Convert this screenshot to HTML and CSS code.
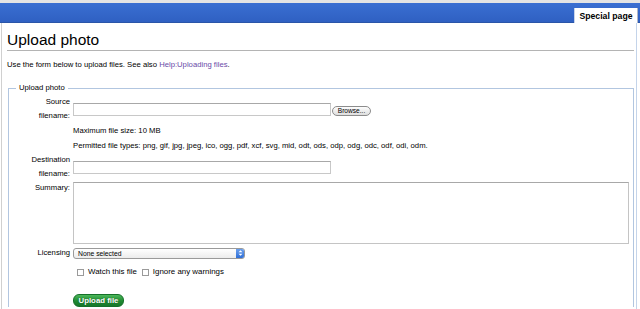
FILE: index.html
```html
<!DOCTYPE html>
<html>
<head>
<meta charset="utf-8">
<link rel="stylesheet" href="styles.css">
</head>
<body>
<div class="topstrip"></div>
<div class="topbar"><div class="tab">Special page</div></div>
<div class="page">
  <h1 class="title">Upload photo</h1>
  <p class="intro">Use the form below to upload files. See also <a class="link" href="#">Help:Uploading files</a>.</p>
  <fieldset class="box">
    <legend class="legend">Upload photo</legend>
    <div class="row row-source">
      <div class="label">Source<br>filename:</div>
      <div class="field source-field">
        <span class="input input-source"></span>
        <span class="browse">Browse...</span>
      </div>
    </div>
    <div class="row row-note1">
      <div class="label"></div>
      <div class="field note">Maximum file size: 10 MB</div>
    </div>
    <div class="row row-note2">
      <div class="label"></div>
      <div class="field note">Permitted file types: png, gif, jpg, jpeg, ico, ogg, pdf, xcf, svg, mid, odt, ods, odp, odg, odc, odf, odi, odm.</div>
    </div>
    <div class="row row-dest">
      <div class="label">Destination<br>filename:</div>
      <div class="field"><span class="input input-dest"></span></div>
    </div>
    <div class="row row-summary">
      <div class="label">Summary:</div>
      <div class="field"><span class="textarea"></span></div>
    </div>
    <div class="row row-license">
      <div class="label">Licensing</div>
      <div class="field">
        <span class="select">None selected<span class="select-arrow"><svg width="7" height="8" viewBox="0 0 7 8"><path d="M1.5 3.2 L3.5 1.2 L5.5 3.2 Z M1.5 4.8 L3.5 6.8 L5.5 4.8 Z" fill="#fff"/></svg></span></span>
      </div>
    </div>
    <div class="row row-checks">
      <div class="label"></div>
      <div class="field checks">
        <span class="check"></span><span class="check-label">Watch this file</span>
        <span class="check check2"></span><span class="check-label">Ignore any warnings</span>
      </div>
    </div>
    <div class="row row-submit">
      <div class="label"></div>
      <div class="field"><span class="upload">Upload file</span></div>
    </div>
  </fieldset>
</div>
</body>
</html>
```

FILE: styles.css
```css
html, body {
  margin: 0;
  padding: 0;
  background: #fff;
  font-family: "Liberation Sans", Arial, sans-serif;
  color: #000;
  overflow: hidden;
}

.topstrip {
  height: 3px;
  background: #e4e4e4;
}

.topbar {
  height: 19px;
  background: linear-gradient(#3a6fd2, #2f60c2);
  border-bottom: 1px solid #2a55a8;
  display: flex;
  justify-content: flex-end;
  align-items: flex-end;
  padding-right: 2px;
}

.tab {
  background: #fff;
  height: 15px;
  width: 64px;
  box-sizing: border-box;
  border-left: 1px solid #c8d4ea;
  border-right: 1px solid #b0b8c8;
  font-size: 8.7px;
  font-weight: bold;
  text-align: center;
  line-height: 16px;
  margin-bottom: -1px;
}

.page {
  margin: 0 3px 0 1px;
  border-left: 1px solid #d0d0d0;
  border-right: 1px solid #c4d4ea;
  padding: 0 2px 0 5px;
  height: 290px;
}

.title {
  margin: 0;
  padding-top: 8px;
  font-size: 15.5px;
  font-weight: normal;
  line-height: 17px;
  border-bottom: 1px solid #b4b4b4;
  padding-bottom: 2px;
}

.intro {
  margin: 9px 0 0 0;
  font-size: 7.7px;
  line-height: 10px;
}

.link {
  color: #6a4aa8;
  text-decoration: none;
}

.box {
  margin: 13px 0 0 1px;
  padding: 0 0 0 0;
  border: 1px solid #b2c6e0;
  border-bottom: none;
  min-width: 0;
}

.legend {
  font-size: 7.7px;
  padding: 0 3px;
  margin-left: 7px;
  line-height: 10px;
}

.row {
  display: flex;
  align-items: flex-start;
}

.label {
  width: 61px;
  flex: none;
  text-align: right;
  font-size: 7.7px;
  line-height: 14px;
  margin-right: 3px;
}

.field {
  font-size: 7.7px;
  line-height: 12px;
}

.row-source { margin-top: 2px; }
.source-field {
  display: flex;
  align-items: flex-start;
  padding-top: 8px;
}

.input {
  display: block;
  box-sizing: border-box;
  height: 13px;
  border: 1px solid #c8c8c8;
  border-top-color: #a8a8a8;
  background: #fff;
}
.input-source { width: 258px; }
.input-dest { width: 258px; margin-top: 8px; }

.browse {
  display: block;
  margin-left: 1px;
  margin-top: 3px;
  height: 10px;
  width: 39px;
  box-sizing: border-box;
  border: 1px solid #8c8c8c;
  border-radius: 5px;
  background: linear-gradient(#fdfdfd, #dedede);
  font-size: 6.6px;
  line-height: 8px;
  text-align: center;
}

.row-note1 { margin-top: 1px; }
.row-note1 .field, .row-note2 .field { line-height: 13px; }
.row-note2 { margin-top: 2px; }

.row-dest { margin-top: 1px; }
.row-summary { margin-top: 0px; }

.textarea {
  display: block;
  box-sizing: border-box;
  width: 556px;
  height: 62px;
  margin-top: 1px;
  border: 1px solid #c4c4c4;
  border-top-color: #a8a8a8;
  background: #fff;
}

.row-license { margin-top: 3px; align-items: center; }
.row-license .label { line-height: 12px; }

.select {
  display: flex;
  align-items: center;
  position: relative;
  box-sizing: border-box;
  width: 172px;
  height: 11px;
  border: 1px solid #9a9a9a;
  border-radius: 3px;
  background: linear-gradient(#ffffff, #ececec);
  font-size: 6.8px;
  line-height: 9px;
  padding-left: 4px;
}

.select-arrow {
  position: absolute;
  right: 0;
  top: 0;
  bottom: 0;
  width: 8px;
  border-radius: 0 2px 2px 0;
  background: linear-gradient(#6aa0ee, #2f6ed6);
  display: flex;
  align-items: center;
  justify-content: center;
}

.row-checks { margin-top: 7px; }
.checks {
  display: flex;
  align-items: center;
  padding-left: 4px;
  font-size: 7.9px;
}
.check {
  display: block;
  width: 7px;
  height: 7px;
  box-sizing: border-box;
  border: 1px solid #9a9a9a;
  background: #fff;
  margin-right: 4px;
}
.check2 { margin-left: 5px; }

.row-submit { margin-top: 16px; }
.upload {
  display: block;
  width: 51px;
  height: 13px;
  box-sizing: border-box;
  border-radius: 6px;
  background: linear-gradient(#4cb85a, #1f8a32 55%, #17772a);
  border: 1px solid #16702a;
  color: #fff;
  font-weight: bold;
  font-size: 7.8px;
  line-height: 11px;
  text-align: center;
  text-shadow: 0 0 1px #0d4a18;
}
```
